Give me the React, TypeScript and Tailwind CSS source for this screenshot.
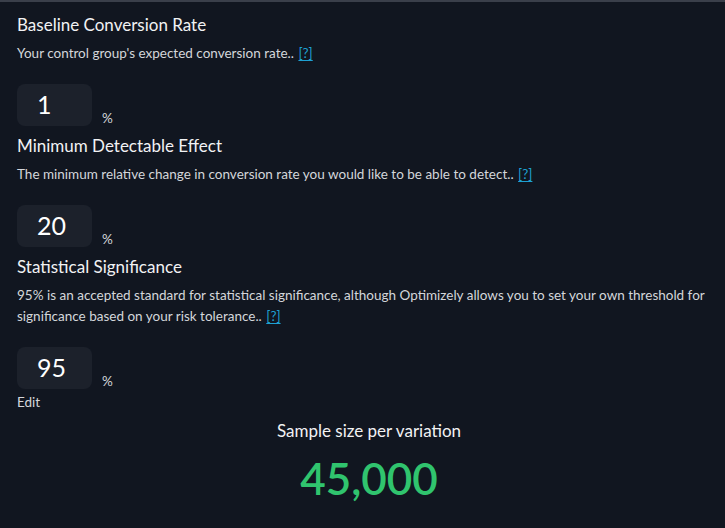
import React from 'react'

const fields = [
  {
    title: 'Baseline Conversion Rate',
    desc: "Your control group's expected conversion rate.",
    value: '1',
  },
  {
    title: 'Minimum Detectable Effect',
    desc: 'The minimum relative change in conversion rate you would like to be able to detect.',
    value: '20',
  },
  {
    title: 'Statistical Significance',
    desc: '95% is an accepted standard for statistical significance, although Optimizely allows you to set your own threshold for significance based on your risk tolerance.',
    value: '95',
  },
]

export default function App() {
  return (
    <div
      className="min-h-screen w-full border-t-2 border-[#3a3f4a] bg-[#111620] text-[#f3f4f6]"
      style={{ fontFamily: 'Lato, "Noto Sans", sans-serif' }}>
      <div className="pl-[17px] pr-[14px] pt-[9px]">
        {fields.map((f, i) => (
          <div key={f.title} className={i > 0 ? 'mt-[6px]' : ''}>
            <h2 className="text-[17px] leading-[28px] text-[#f1f2f4]">{f.title}</h2>
            <p className="mt-[4px] text-[13.5px] leading-[21px] text-[#d4d6db]">
              {f.desc}.{' '}
              <a href="#" className="ml-[1px] text-[#1ea0d2] underline underline-offset-2">[?]</a>
            </p>
            <div className="mt-[20px] flex items-end gap-[10px]">
              <div className="flex h-[42px] w-[75px] items-center rounded-lg bg-[#1c212b] pl-[20px] text-[25px] text-white">
                {f.value}
              </div>
              <span className="mb-[-2px] text-[13.5px] text-[#d4d6db]">%</span>
            </div>
          </div>
        ))}
        <p className="mt-[4px] text-[13.5px] leading-[18px] text-[#d4d6db]">Edit</p>
        <div className="mt-[9px] flex flex-col items-center pl-[10px]">
          <p className="text-[17px] leading-[22px] text-[#f1f2f4]">Sample size per variation</p>
          <p className="mt-[12px] text-[44px] font-semibold leading-[48px] text-[#30c46e]">45,000</p>
        </div>
      </div>
    </div>
  )
}
